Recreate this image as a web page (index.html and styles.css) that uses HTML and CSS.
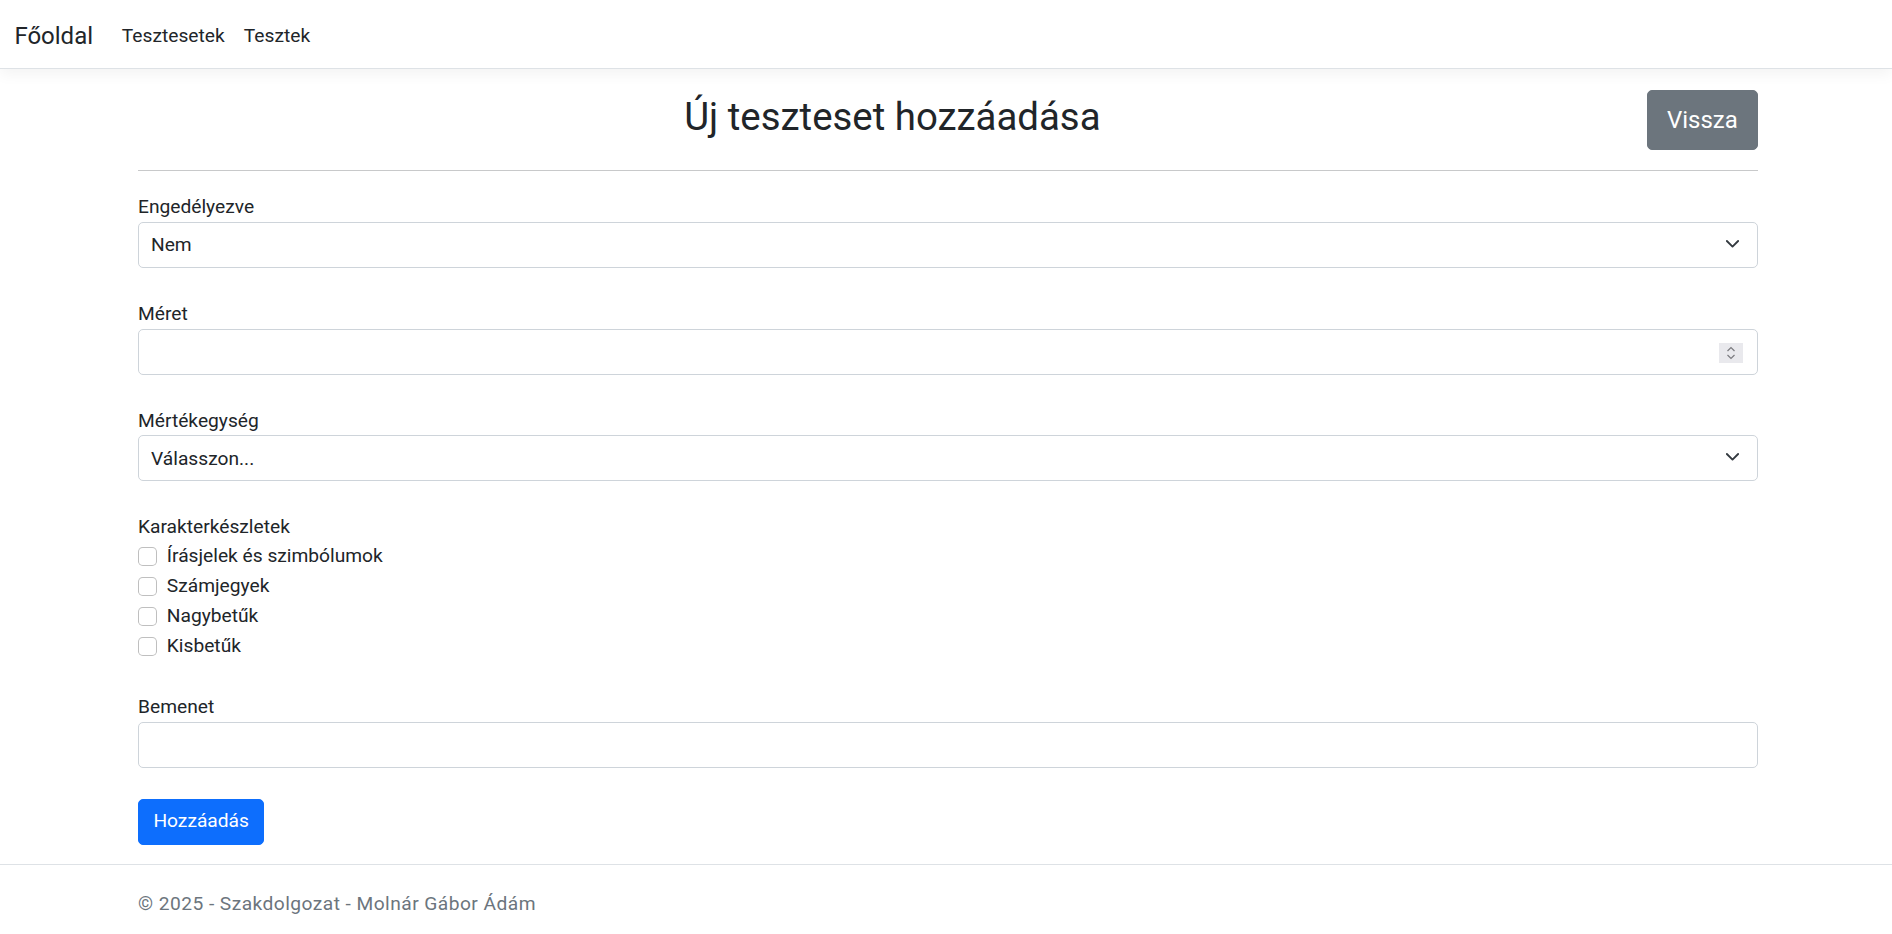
FILE: index.html
```html
<!DOCTYPE html>
<html lang="hu">
<head>
<meta charset="utf-8">
<title>Új teszteset hozzáadása</title>
<link rel="stylesheet" href="styles.css">
</head>
<body>
<header class="navbar">
  <a class="brand" href="#">Főoldal</a>
  <nav class="nav">
    <a class="nav-link" href="#">Tesztesetek</a>
    <a class="nav-link" href="#">Tesztek</a>
  </nav>
</header>

<main class="main">
  <div class="title-row">
    <h1 class="title">Új teszteset hozzáadása</h1>
    <button class="btn btn-secondary" type="button">Vissza</button>
  </div>
  <hr class="divider">

  <form class="form">
    <div class="group">
      <label class="label">Engedélyezve</label>
      <div class="field">
        <select class="control">
          <option>Nem</option>
        </select>
        <svg class="chev" viewBox="0 0 16 16" width="15" height="15"><path d="M2 5l6 6 6-6" fill="none" stroke="#343a40" stroke-width="2" stroke-linecap="round" stroke-linejoin="round"/></svg>
      </div>
    </div>

    <div class="group">
      <label class="label">Méret</label>
      <div class="field">
        <input class="control" type="text">
        <span class="spin"><svg viewBox="0 0 24 20" width="24" height="20"><polyline points="8.5,8 12,4.5 15.5,8" fill="none" stroke="#7a7a7f" stroke-width="1.2"/><polyline points="8.5,12 12,15.5 15.5,12" fill="none" stroke="#7a7a7f" stroke-width="1.2"/></svg></span>
      </div>
    </div>

    <div class="group">
      <label class="label">Mértékegység</label>
      <div class="field">
        <select class="control">
          <option>Válasszon...</option>
        </select>
        <svg class="chev" viewBox="0 0 16 16" width="15" height="15"><path d="M2 5l6 6 6-6" fill="none" stroke="#343a40" stroke-width="2" stroke-linecap="round" stroke-linejoin="round"/></svg>
      </div>
    </div>

    <div class="group">
      <label class="label">Karakterkészletek</label>
      <div class="checks">
        <label class="check"><input type="checkbox"><span>Írásjelek és szimbólumok</span></label>
        <label class="check"><input type="checkbox"><span>Számjegyek</span></label>
        <label class="check"><input type="checkbox"><span>Nagybetűk</span></label>
        <label class="check"><input type="checkbox"><span>Kisbetűk</span></label>
      </div>
    </div>

    <div class="group group-last">
      <label class="label">Bemenet</label>
      <div class="field">
        <input class="control" type="text">
      </div>
    </div>

    <button class="btn btn-primary" type="button">Hozzáadás</button>
  </form>
</main>

<footer class="footer">
  © 2025 - Szakdolgozat - Molnár Gábor Ádám
</footer>
</body>
</html>
```

FILE: styles.css
```css
html, body {
  margin: 0;
  padding: 0;
}

body {
  font-family: Roboto, "Liberation Sans", sans-serif;
  font-size: 19.2px;
  line-height: 1.5;
  color: #212529;
  background: #fff;
  overflow: hidden;
}

/* Navbar */
.navbar {
  display: flex;
  align-items: center;
  box-sizing: border-box;
  height: 69px;
  padding: 4px 14.4px 0;
  border-bottom: 1px solid #dee2e6;
  box-shadow: 0 5px 14px rgba(0, 0, 0, 0.05);
  background: #fff;
}

.brand {
  font-size: 24px;
  line-height: 36px;
  margin-right: 19.2px;
  color: #212529;
  text-decoration: none;
}

.nav {
  display: flex;
}

.nav-link {
  padding: 0 9.6px;
  line-height: 28.8px;
  color: #212529;
  text-decoration: none;
}

/* Main */
.main {
  padding: 0 134px 0 138px;
}

.title-row {
  display: flex;
  align-items: flex-start;
  margin-top: 21px;
}

.title {
  flex: 1;
  margin: 0;
  padding-top: 4px;
  text-align: center;
  font-size: 38.4px;
  font-weight: 400;
  line-height: 1.2;
}

.btn {
  font-family: inherit;
  color: #fff;
  cursor: pointer;
  border-radius: 5px;
}

.btn-secondary {
  background: #6c757d;
  border: 1px solid #6c757d;
  font-size: 24px;
  line-height: 36px;
  padding: 11px 19.2px;
}

.btn-primary {
  background: #0d6efd;
  border: 1px solid #0d6efd;
  font-size: 19.2px;
  line-height: 28.8px;
  padding: 7.6px 14.4px;
}

.divider {
  margin: 20px 0 0;
  border: 0;
  border-top: 1px solid #c8c9ca;
}

/* Form */
.form {
  padding-top: 22px;
}

.group {
  margin-bottom: 32px;
}

.group-last {
  margin-bottom: 31px;
}

.label {
  display: block;
  line-height: 28.8px;
}

.field {
  position: relative;
}

.control {
  display: block;
  width: 100%;
  box-sizing: border-box;
  height: 46px;
  margin: 0;
  padding: 0 12px;
  font-family: inherit;
  font-size: 19.2px;
  color: #212529;
  background: #fff;
  border: 1px solid #ced4da;
  border-radius: 5px;
  -webkit-appearance: none;
  appearance: none;
  outline: none;
}

.chev {
  position: absolute;
  right: 18px;
  top: 50%;
  transform: translateY(-58%);
  pointer-events: none;
}

.spin {
  position: absolute;
  right: 15px;
  top: 50%;
  transform: translateY(-45%);
  width: 24px;
  height: 20px;
  background: #e9e9ed;
  display: flex;
}

/* Checkboxes */
.checks {
  display: flex;
  flex-direction: column;
}

.check {
  display: flex;
  align-items: flex-start;
  height: 28.8px;
  line-height: 28.8px;
  margin-bottom: 1.2px;
}

.check:last-child {
  margin-bottom: 0;
}

.check input {
  -webkit-appearance: none;
  appearance: none;
  flex: none;
  box-sizing: border-box;
  width: 19px;
  height: 19px;
  margin: 4.8px 9.8px 0 0;
  border: 1px solid rgba(0, 0, 0, 0.25);
  border-radius: 4.8px;
  background: #fff;
}

/* Footer */
.footer {
  margin-top: 19px;
  border-top: 1px solid #dee2e6;
  padding: 25px 134px 0 138px;
  line-height: 28.8px;
  color: #6c757d;
  letter-spacing: 0.45px;
  white-space: nowrap;
}
```
